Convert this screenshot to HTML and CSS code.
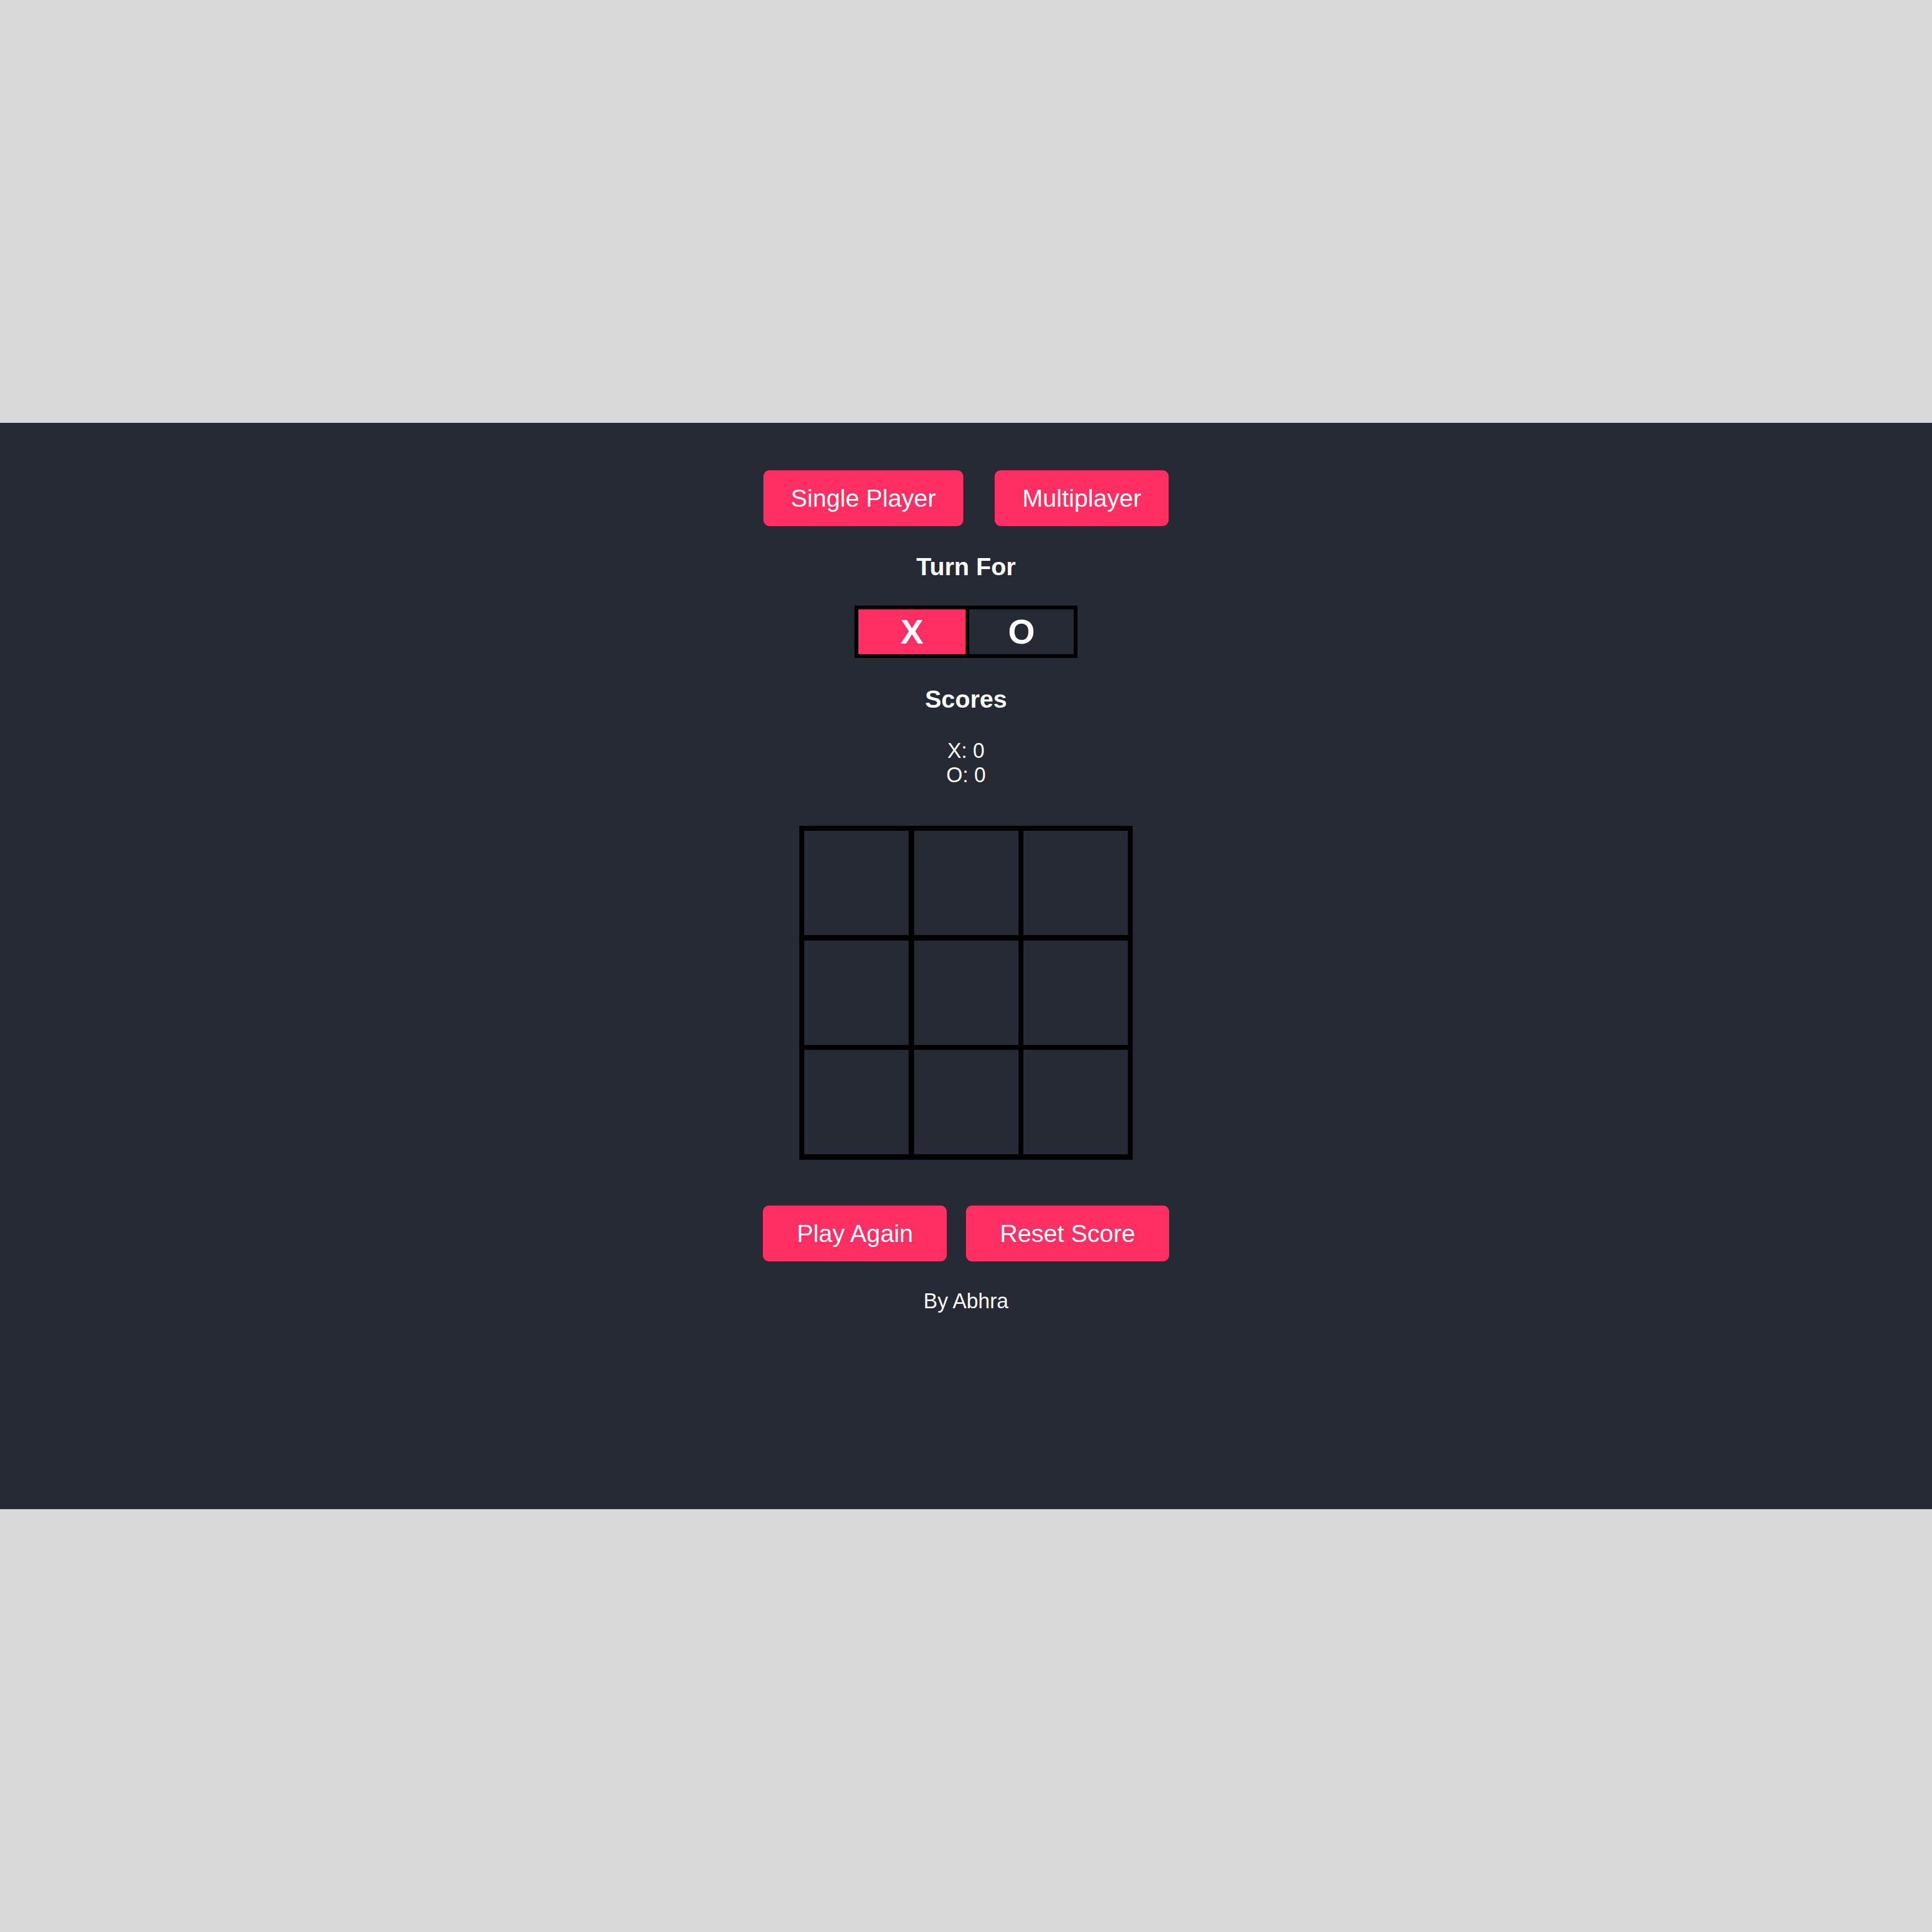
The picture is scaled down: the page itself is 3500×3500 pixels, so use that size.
FILE: index.html
```
<html><head>
<title>Tic Tac Toe</title>
<link rel="stylesheet" href="styles.css">
</head><body>

<div class="game">
<div class="modes"><button class="btn">Single Player</button><button class="btn">Multiplayer</button></div>

<div class="title">Turn For</div>
<div class="turn"><div class="turn-x">X</div><div class="turn-o">O</div></div>

<div class="title scores-title">Scores</div>
<div class="scores">
<div>X: 0</div>
<div>O: 0</div>
</div>

<div class="board">
<div class="cell"></div><div class="cell"></div><div class="cell"></div>
<div class="cell"></div><div class="cell"></div><div class="cell"></div>
<div class="cell"></div><div class="cell"></div><div class="cell"></div>
</div>

<div class="controls"><button class="btn">Play Again</button><button class="btn">Reset Score</button></div>

<div class="foot">By Abhra</div>
</div>

</body></html>
```

FILE: styles.css
```
html{background:#d9d9d9;}
body{margin:0;min-height:100vh;display:flex;align-items:center;font-family:"Liberation Sans",Arial,sans-serif;color:#fff;}

.game{flex:1;height:1968px;box-sizing:border-box;padding-top:86.3px;background:#252a34;display:flex;flex-direction:column;align-items:center;}

.btn{height:101px;padding:0 49.5px;border:none;border-radius:11px;background:#ff2e63;color:#fff;font-family:inherit;font-size:44.6px;line-height:101px;}
.modes{display:flex;gap:57.6px;}
.controls{display:flex;gap:35px;margin-top:83px;}
.controls .btn{padding:0 61px;}

.title{margin-top:47.4px;font-size:44.6px;line-height:51px;font-weight:bold;}
.scores-title{margin-top:49px;}

.turn{display:flex;margin-top:45px;border:7px solid #000;}
.turn-x,.turn-o{height:81px;font-size:62.5px;font-weight:bold;line-height:81px;text-align:center;}
.turn-x{width:194px;border-right:7px solid #000;background:#ff2e63;}
.turn-o{width:189px;}

.scores{margin-top:47.7px;font-size:37.9px;line-height:43.5px;text-align:center;}

.board{display:grid;grid-template-columns:repeat(3,189px);grid-template-rows:repeat(3,189px);gap:9.4px;padding:9.4px;margin-top:69.6px;background:#000;}
.cell{background:#252a34;}

.foot{margin-top:51.4px;font-size:37.9px;line-height:43.5px;}
```
